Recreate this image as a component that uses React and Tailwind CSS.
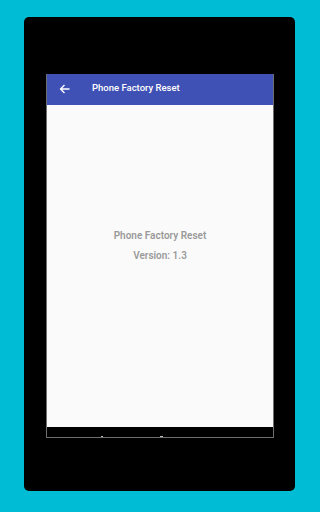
export default function App() {
  return (
    <div className="w-[320px] h-[512px] bg-[#00bcd4] pt-[17px] pl-[24px]" style={{ fontFamily: "Roboto, 'Liberation Sans', sans-serif" }}>
      <div className="w-[271px] h-[474px] bg-black rounded-[5px] pt-[57px] pl-[22px]">
        <div className="w-[228px] h-[364px] flex flex-col border-x border-b border-[#6e6e6e]">
          <div className="h-[31px] bg-[#3f51b5] flex items-center shrink-0 pb-[2px]">
            <svg className="ml-[12px]" width="12" height="12" viewBox="0 0 24 24" fill="none" stroke="white" strokeWidth="2.6">
              <path d="M21 12H4M11 4l-8 8 8 8" />
            </svg>
            <span className="ml-[21px] text-white text-[9.5px] font-medium">Phone Factory Reset</span>
          </div>
          <div className="flex-1 bg-[#fafafa] flex flex-col items-center justify-center pb-[40px]">
            <div className="text-[#9a9a9a] text-[10px] font-semibold leading-[12px]">Phone Factory Reset</div>
            <div className="text-[#9a9a9a] text-[10px] font-semibold leading-[12px] mt-[8px]">Version: 1.3</div>
          </div>
          <div className="h-[10px] bg-black shrink-0 flex items-end">
            <div className="w-[2px] h-[1px] bg-[#bbbbbb] ml-[54px]" />
            <div className="w-[3px] h-[1px] bg-[#bbbbbb] ml-[57px]" />
          </div>
        </div>
      </div>
    </div>
  );
}
